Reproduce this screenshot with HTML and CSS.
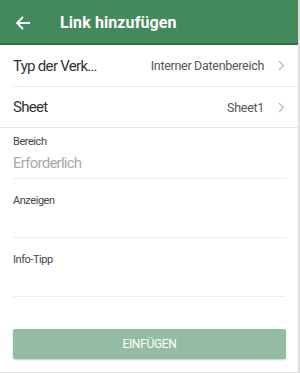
FILE: index.html
```html
<!DOCTYPE html>
<html lang="de">
<head>
<meta charset="utf-8">
<link rel="stylesheet" href="styles.css">
</head>
<body>
<div class="page">
  <header class="bar">
    <svg class="back" width="16" height="16" viewBox="0 0 16 16"><path d="M15 8H2M8 2L2 8l6 6" fill="none" stroke="#fff" stroke-width="1.8"/></svg>
    <span class="title">Link hinzufügen</span>
  </header>
  <div class="list">
    <div class="row first">
      <span class="name">Typ der Verk…</span>
      <span class="value">Interner Datenbereich</span>
      <svg class="chev" width="7" height="11" viewBox="0 0 7 11"><path d="M1 1l4.5 4.5L1 10" fill="none" stroke="#b8b8b8" stroke-width="1.2"/></svg>
    </div>
    <div class="row">
      <span class="name">Sheet</span>
      <span class="value">Sheet1</span>
      <svg class="chev" width="7" height="11" viewBox="0 0 7 11"><path d="M1 1l4.5 4.5L1 10" fill="none" stroke="#b8b8b8" stroke-width="1.2"/></svg>
    </div>
  </div>
  <div class="fields">
    <div class="field">
      <div class="label">Bereich</div>
      <div class="input placeholder">Erforderlich</div>
    </div>
    <div class="field">
      <div class="label">Anzeigen</div>
      <div class="input"></div>
    </div>
    <div class="field">
      <div class="label">Info-Tipp</div>
      <div class="input"></div>
    </div>
    <button class="insert">EINFÜGEN</button>
  </div>
</div>
</body>
</html>
```
FILE: styles.css
```css
html, body { margin: 0; padding: 0; background: #fff; }
body { font-family: Roboto, "Liberation Sans", sans-serif; }
.page {
  width: 298px;
  height: 372px;
  border-right: 2px solid #dedede;
  border-bottom: 1px solid #dedede;
  overflow: hidden;
  background: #fff;
}
.bar {
  height: 41px;
  padding-top: 2px;
  background: #428a5c;
  border-bottom: 2px solid #2f7147;
  display: flex;
  align-items: center;
  color: #fff;
}
.back { margin-left: 15px; flex: none; }
.title {
  margin-left: 29px;
  font-size: 16px;
  font-weight: 700;
  letter-spacing: 0.1px;
}
.list { border-bottom: 1px solid #e6e6e6; }
.row {
  height: 40px;
  margin-left: 13px;
  display: flex;
  align-items: center;
}
.row.first { height: 41px; border-bottom: 1px solid #ececec; }
.name { font-size: 15px; color: #333; flex: 1; letter-spacing: -0.7px; }
.value { font-size: 12.5px; color: #555; letter-spacing: -0.3px; }
.chev { margin-left: 14px; margin-right: 13px; flex: none; }
.fields {
  padding: 7px 12px 0 13px;
  display: flex;
  flex-direction: column;
}
.field + .field { margin-top: 15px; }
.label { font-size: 11px; line-height: 14px; color: #444; letter-spacing: -0.45px; }
.input {
  height: 29px;
  line-height: 29px;
  font-size: 15px;
  color: #333;
  letter-spacing: -0.75px;
  border-bottom: 1px solid #ededed;
}
.input.placeholder { color: #aaa; }
.insert {
  margin-top: 32px;
  height: 30px;
  border: none;
  border-radius: 2px;
  background: #94bca3;
  color: #fff;
  font-family: Roboto, "Liberation Sans", sans-serif;
  font-size: 12px;
  letter-spacing: -0.3px;
  padding: 0;
  box-shadow: 0 1px 2px rgba(0,0,0,0.2);
}
```
